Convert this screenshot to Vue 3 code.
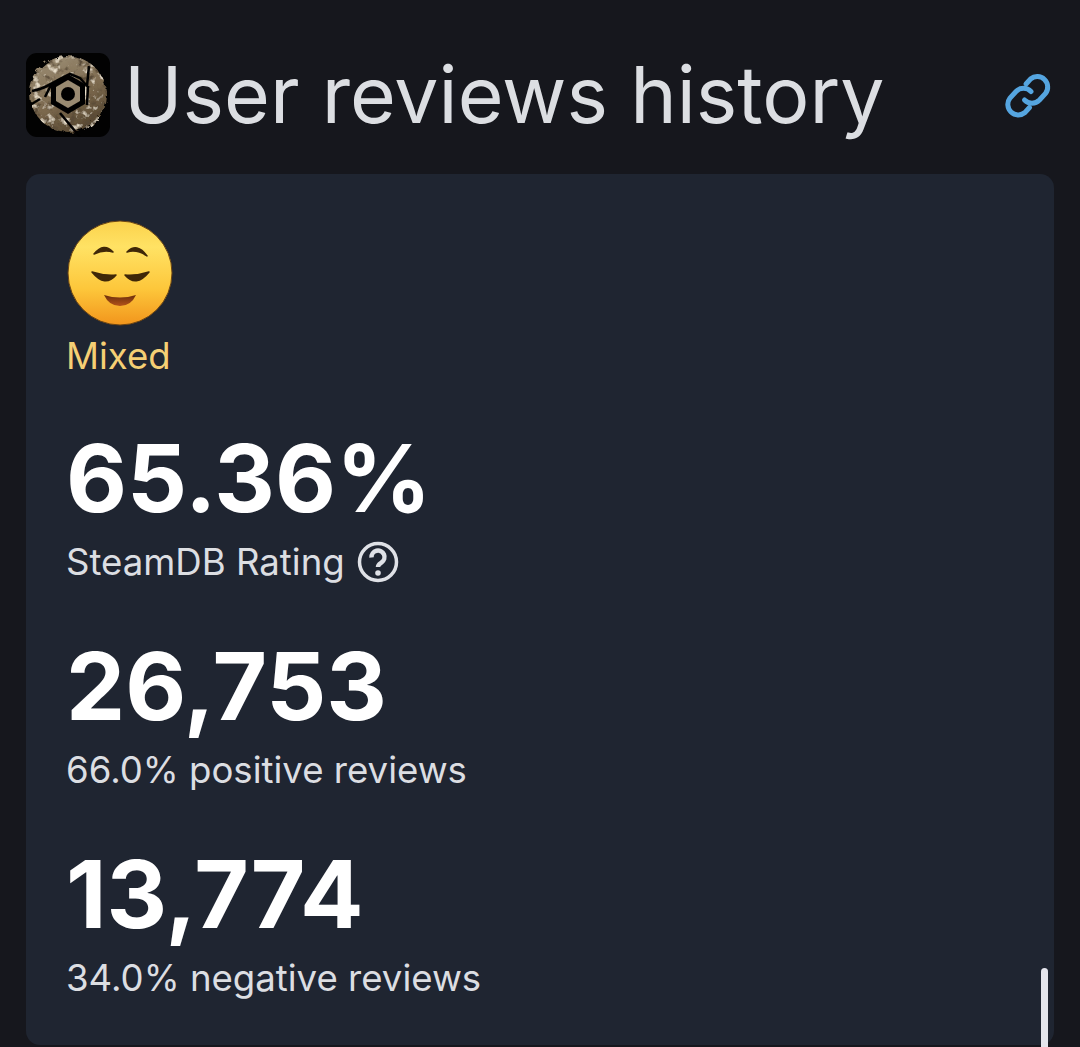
<template>
  <div class="page">
    <header class="head">
      <svg class="game-icon" viewBox="0 0 84 84">
        <defs>
          <filter id="rough" x="-10%" y="-10%" width="120%" height="120%">
            <feTurbulence type="fractalNoise" baseFrequency="0.14" numOctaves="3" seed="11" result="noise" />
            <feDisplacementMap in="SourceGraphic" in2="noise" scale="7" result="moved" />
            <feColorMatrix in="noise" type="matrix" values="0 0 0 0 0.1  0 0 0 0 0.07  0 0 0 0 0.04  4 0 0 0 -2.1" result="dark" />
            <feComposite in="dark" in2="moved" operator="in" result="spots" />
            <feColorMatrix in="noise" type="matrix" values="0 0 0 0 0.8  0 0 0 0 0.72  0 0 0 0 0.58  0 4 0 0 -2.2" result="light" />
            <feComposite in="light" in2="moved" operator="in" result="glints" />
            <feMerge>
              <feMergeNode in="moved" />
              <feMergeNode in="spots" />
              <feMergeNode in="glints" />
            </feMerge>
          </filter>
          <filter id="soft">
            <feGaussianBlur stdDeviation="0.7" />
          </filter>
          <linearGradient id="rock" x1="0.2" y1="0" x2="0.7" y2="1">
            <stop offset="0" stop-color="#9c8e75" />
            <stop offset="0.55" stop-color="#7d6a4f" />
            <stop offset="1" stop-color="#55462f" />
          </linearGradient>
        </defs>
        <rect width="84" height="84" rx="11" fill="#020202" />
        <g filter="url(#soft)">
          <circle cx="42" cy="41" r="38" fill="url(#rock)" filter="url(#rough)" />
          <path d="M6 38q10-2 17-6l13-7 8-4 10 4 7 8 2-20M62 33l-1 19M25 32l-6 12M34 60l20 24M4 52l10-6" fill="none" stroke="#060504" stroke-width="2.600" />
          <path d="M42 21l17 10v20l-17 10-17-10V31z" fill="#060504" />
          <path d="M42 27l12 7v14l-12 7-12-7V34z" fill="#9a8b72" />
          <circle cx="42" cy="41" r="7" fill="#060504" />
        </g>
      </svg>
      <h1 class="title">User reviews history</h1>
      <svg class="link-icon" viewBox="0 0 48 48" fill="none" stroke="#55a5e0" stroke-width="5" stroke-linecap="round">
        <path d="M22 13l4.500-5a10.500 10.500 0 0 1 15 14.500l-6 6.500a10.500 10.500 0 0 1-15 0" />
        <path d="M27 20.500a10.500 10.500 0 0 0-15 0l-6 6.500a10.500 10.500 0 0 0 15 14.500l4.500-5" />
      </svg>
    </header>

    <section class="card">
      <div class="mood">
        <svg class="emoji" viewBox="0 0 106 106">
          <defs>
            <linearGradient id="face" x1="0" y1="0" x2="0" y2="1">
              <stop offset="0" stop-color="#fbd24c" />
              <stop offset="0.25" stop-color="#ffe264" />
              <stop offset="0.65" stop-color="#fdc73b" />
              <stop offset="1" stop-color="#f2951c" />
            </linearGradient>
            <linearGradient id="lips" x1="0" y1="0" x2="0" y2="1">
              <stop offset="0" stop-color="#6b2e0c" />
              <stop offset="1" stop-color="#b4531a" />
            </linearGradient>
          </defs>
          <circle cx="53" cy="53" r="52" fill="url(#face)" stroke="#6b4413" stroke-width="1" />
          <path d="M27 34q10-12 19-2q-9-3-19 2zM60 32q10-10 20 4q-10-7-20-4z" fill="#3f2708" stroke="#3f2708" stroke-width="1.500" stroke-linejoin="round" />
          <path d="M25 52q12 4 24 3q-11 13-24-3zM58 55q12 1 24-3q-13 16-24 3z" fill="#3f2708" stroke="#3f2708" stroke-width="1.500" stroke-linejoin="round" />
          <path d="M37 75q16 5 32 0q-5 11-16 11t-16-11z" fill="url(#lips)" />
        </svg>
        <div class="mood-label">Mixed</div>
      </div>

      <div v-for="stat in stats" :key="stat.value" class="stat">
        <div class="value">{{ stat.value }}</div>
        <div class="label">
          {{ stat.label }}
          <svg v-if="stat.help" class="help" viewBox="0 0 42 42">
            <circle cx="21" cy="21" r="18.500" fill="none" stroke="#dfe1e6" stroke-width="3.500" />
            <path d="M14.500 16.500a6.500 6.500 0 1 1 10 5c-2.200 1.500-3.500 2-3.500 4.500" fill="none" stroke="#dfe1e6" stroke-width="4.500" />
            <circle cx="21" cy="32" r="2.800" fill="#dfe1e6" />
          </svg>
        </div>
      </div>
      <span class="scrollbar"></span>
    </section>
  </div>
</template>

<script setup>
const stats = [
  { value: '65.36%', label: 'SteamDB Rating', help: true },
  { value: '26,753', label: '66.0% positive reviews' },
  { value: '13,774', label: '34.0% negative reviews' }
]
</script>

<style>
html,
body {
  background: #16171d;
  overflow: hidden;
}
</style>

<style scoped>
.page {
  height: 1047px;
  box-sizing: border-box;
  padding: 53px 26px 0;
  background: #16171d;
  font-family: Inter, "Liberation Sans", sans-serif;
}

.head {
  display: flex;
  align-items: center;
  height: 84px;
  margin-bottom: 37px;
}

.game-icon {
  width: 84px;
  height: 84px;
  flex: none;
  margin-right: 14px;
}

.title {
  flex: 1;
  margin: 0;
  font-size: 78.700px;
  font-weight: 400;
  line-height: 84px;
  color: #dcdee2;
  white-space: nowrap;
}

.link-icon {
  width: 48px;
  height: 48px;
  flex: none;
  margin-right: 2px;
}

.card {
  position: relative;
  height: 871px;
  box-sizing: border-box;
  padding: 46px 40px 0;
  background: #1f2531;
  border-radius: 14px;
}

.mood {
  height: 198px;
}

.emoji {
  display: block;
  width: 106px;
  height: 106px;
  margin-left: 1px;
}

.mood-label {
  margin-top: 9px;
  font-size: 36.500px;
  line-height: 42px;
  color: #f5cf74;
}

.stat {
  margin-bottom: 43px;
}

.value {
  margin-bottom: 3px;
  font-size: 94px;
  font-weight: 700;
  line-height: 120px;
  color: #fff;
}

.label {
  display: flex;
  align-items: center;
  gap: 12px;
  font-size: 36.600px;
  line-height: 42px;
  color: #dcdee2;
}

.help {
  width: 42px;
  height: 42px;
}

.scrollbar {
  position: absolute;
  top: 794px;
  right: 6px;
  width: 7px;
  height: 80px;
  border-radius: 4px 4px 0 0;
  background: #e4e5ec;
}
</style>
